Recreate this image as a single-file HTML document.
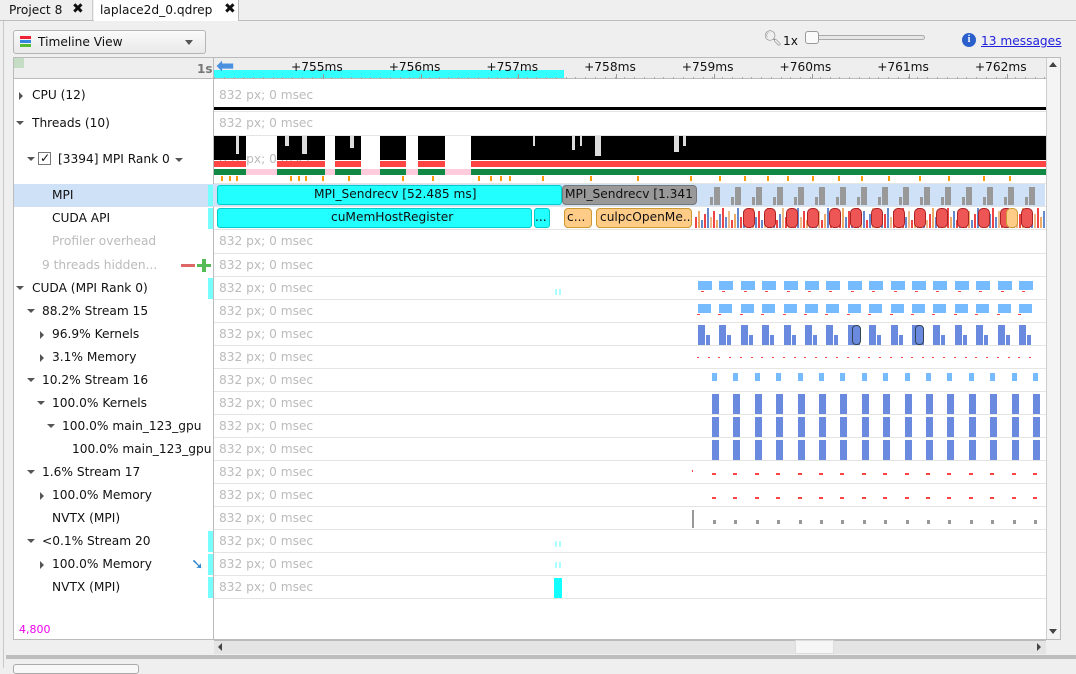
<!DOCTYPE html><html><head><meta charset="utf-8"><style>
*{margin:0;padding:0;box-sizing:border-box}
body{width:1076px;height:668px;background:#efefef;font-family:"DejaVu Sans","Liberation Sans",sans-serif;font-size:12.2px;color:#111;position:relative;overflow:hidden}
.a{position:absolute}
.t{position:absolute;white-space:nowrap;line-height:15px}
.g{color:#bbb}
.tri{position:absolute;width:0;height:0}
.tr{border-left:4px solid #555;border-top:4px solid transparent;border-bottom:4px solid transparent}
.td{border-top:4px solid #555;border-left:4px solid transparent;border-right:4px solid transparent}
</style></head><body>
<div class="a" style="left:0;top:0;width:1076px;height:21px;background:#efefef;border-bottom:1px solid #bdbdbd"></div>
<div class="a" style="left:3px;top:0;width:90px;height:21px;border-right:1px solid #ccc"></div>
<div class="t" style="left:9px;top:3px">Project 8</div><div class="t" style="left:72px;top:2px;font-weight:bold;font-size:14px">✖</div>
<div class="a" style="left:94px;top:0;width:145px;height:21px;background:#fff;border-right:1px solid #bbb"></div>
<div class="t" style="left:100px;top:3px">laplace2d_0.qdrep</div><div class="t" style="left:224px;top:2px;font-weight:bold;font-size:14px">✖</div>
<div class="a" style="left:3px;top:21px;width:1px;height:647px;background:#c8c8c8"></div>
<div class="a" style="left:13px;top:30px;width:193px;height:24px;background:linear-gradient(#fafafa,#e9e9e9);border:1px solid #b5b5b5;border-radius:3px"></div>
<div class="a" style="left:20px;top:36px;width:11px;height:3px;background:#e23"></div>
<div class="a" style="left:20px;top:40px;width:11px;height:3px;background:#38d"></div>
<div class="a" style="left:20px;top:44px;width:11px;height:3px;background:#5b3"></div>
<div class="t" style="left:38px;top:35px">Timeline View</div>
<div class="tri td" style="left:185px;top:40px;border-top-width:5px"></div>
<div class="t" style="left:763px;top:31px;font-size:15px;color:#888">🔍︎</div>
<div class="t" style="left:783px;top:34px">1x</div>
<div class="a" style="left:808px;top:35px;width:117px;height:5px;border:1px solid #aaa;border-radius:3px;background:#e6e6e6"></div>
<div class="a" style="left:805px;top:31px;width:14px;height:13px;border:1px solid #999;border-radius:3px;background:#fafafa"></div>
<div class="a" style="left:962px;top:33px;width:14px;height:14px;border-radius:50%;background:#2a5fcc;color:#fff;font-size:10px;font-weight:bold;text-align:center;line-height:14px;font-family:serif">i</div>
<div class="t" style="left:981px;top:34px;color:#2222dd;text-decoration:underline">13 messages</div>
<div class="a" style="left:13px;top:57px;width:1048px;height:583px;background:#fff;border:1px solid #bbb"></div>
<div class="a" style="left:14px;top:58px;width:200px;height:21px;background:#eee;border-bottom:1px solid #bbb"></div>
<div class="a" style="left:14px;top:58px;width:10px;height:10px;background:#c5dcc5"></div>
<div class="t" style="left:197px;top:62px;color:#777;font-weight:bold;font-size:12px">1s</div>
<div class="a" style="left:214px;top:58px;width:832px;height:21px;background:#eee;border-bottom:1px solid #bbb"></div>
<div class="a" style="left:214px;top:70px;width:350px;height:8px;background:#3ff"></div>
<div class="t" style="left:216px;top:56px;font-size:22px;color:#4a90e0;line-height:22px">⬅</div>
<div class="a" style="left:213px;top:58px;width:1px;height:581px;background:#bbb"></div>
<div class="a" style="left:1046px;top:58px;width:14px;height:581px;background:#f4f4f4;border-left:1px solid #ccc"></div>
<div class="tri" style="left:1049px;top:62px;border-bottom:5px solid #444;border-left:4px solid transparent;border-right:4px solid transparent"></div>
<div class="tri" style="left:1049px;top:629px;border-top:5px solid #444;border-left:4px solid transparent;border-right:4px solid transparent"></div>
<div class="a" style="left:214px;top:640px;width:832px;height:14px;background:#e4e4e4;border-top:1px solid #bbb"></div>
<div class="a" style="left:795px;top:640px;width:39px;height:14px;background:#f6f6f6;border:1px solid #ddd"></div>
<div class="tri" style="left:218px;top:643px;border-right:4px solid #444;border-top:4px solid transparent;border-bottom:4px solid transparent"></div>
<div class="tri" style="left:1037px;top:643px;border-left:4px solid #444;border-top:4px solid transparent;border-bottom:4px solid transparent"></div>
<div class="a" style="left:6px;top:655px;width:1070px;height:4px;background:#bdbdbd"></div>
<div class="a" style="left:13px;top:664px;width:126px;height:10px;background:#f8f8f8;border:1px solid #aaa;border-radius:3px"></div>
<div class="t" style="left:19px;top:622px;color:#e0e;font-size:11px">4,800</div>
<div id="rows"></div>
<script>
var H='';
function d(l,t,w,h,s){H+='<div class="a" style="left:'+l+'px;top:'+t+'px;width:'+w+'px;height:'+h+'px;'+s+'"></div>';}
function tx(l,t,s,c){H+='<div class="t'+(c||'')+'" style="left:'+l+'px;top:'+t+'px">'+s+'</div>';}
var labs=['+755ms','+756ms','+757ms','+758ms','+759ms','+760ms','+761ms','+762ms'];
for(var i=0;i<8;i++){var x=323+i*97.7;tx(x-32,60,labs[i],'');d(x,74,1,5,'background:#999');}
for(var x=214;x<1046;x+=9.77)d(x,77,1,2,'background:#aaa');
var rowsA=[[80,112],[112,136],[136,184],[184,207],[207,230],[230,254],[254,277],[277,300],[300,323],[323,346],[346,369],[369,392],[392,415],[415,438],[438,461],[461,484],[484,507],[507,530],[530,553],[553,576],[576,599]];
var lab=[[18,32,'CPU (12)','r'],[18,32,'Threads (10)','d'],[29,58,'[3394] MPI Rank 0','d'],[0,52,'MPI'],[0,52,'CUDA API'],[0,52,'Profiler overhead','',1],[0,42,'9 threads hidden...','',1],[18,32,'CUDA (MPI Rank 0)','d'],[29,42,'88.2% Stream 15','d'],[39,52,'96.9% Kernels','r'],[39,52,'3.1% Memory','r'],[29,42,'10.2% Stream 16','d'],[39,52,'100.0% Kernels','d'],[49,62,'100.0% main_123_gpu','d'],[0,72,'100.0% main_123_gpu'],[29,42,'1.6% Stream 17','d'],[39,52,'100.0% Memory','r'],[0,52,'NVTX (MPI)'],[29,42,'&lt;0.1% Stream 20','d'],[39,52,'100.0% Memory','r'],[0,52,'NVTX (MPI)']];
d(14,184,1031,23,'background:#cfe1f7');
for(var i=0;i<rowsA.length;i++){var r=rowsA[i],L=lab[i],c=(r[0]+r[1])/2;
 d(214,r[1]-1,832,1,'background:#e4e4e4');
 tx(219,c-8,'832 px; 0 msec',' g');
 if(L[3]=='r')H+='<div class="tri tr" style="left:'+(L[0]+1)+'px;top:'+(c-4)+'px"></div>';
 if(L[3]=='d')H+='<div class="tri td" style="left:'+(L[0]-2)+'px;top:'+(c-3)+'px"></div>';
 tx(L[1],c-8,L[2],L[4]?' g':'');
}
[3,4,7,18,19,20].forEach(function(i){d(208,rowsA[i][0]+1,5,rowsA[i][1]-rowsA[i][0]-2,'background:#7ff');});
d(38,152,13,13,'background:#fff;border:1px solid #777');tx(40,151,'✓','');
H+='<div class="tri td" style="left:175px;top:158px"></div>';
d(181,264,14,3,'background:#d66');d(197,264,14,3,'background:#5b5');d(202,259,4,13,'background:#5b5');
tx(191,557,'<span style="color:#38c;font-size:15px;font-weight:bold">➘</span>','');
d(214,107,832,3,'background:#000');
var segs=[[214,246],[277,325],[335,361],[380,406],[418,445],[471,1046]];
d(214,169,832,6,'background:#fcd');
segs.forEach(function(s){d(s[0],136,s[1]-s[0],24,'background:#000');d(s[0],161,s[1]-s[0],6,'background:#f44');d(s[0],169,s[1]-s[0],6,'background:#184');});
[[236,3,18],[285,4,10],[302,5,18],[350,4,12],[595,6,20],[674,5,16],[683,3,10],[572,3,14],[580,2,10],[533,2,10]].forEach(function(g){d(g[0],136,g[1],g[2],'background:#ddd');});
var tk=[221,229,236,290,298,305,322,348,402,432,478,490,500,509,542,590,637,690,719,744,767,787,812,838,861,888,919,948,983,1009];
tk.forEach(function(x){d(x,176,2,5,'background:#f90');});
d(217,185,345,20,'background:#2ff;border:1px solid #0cc;border-radius:3px');tx(314,187,'MPI_Sendrecv [52.485 ms]','');
d(562,185,135,20,'background:#999;border:1px solid #777;border-radius:4px');H+='<div class="t" style="left:565px;top:187px;width:128px;overflow:hidden">MPI_Sendrecv [1.341 ...</div>';
for(var k=0;k<16;k++){var x=710+k*21;d(x,197,3,8,'background:#999');d(x+4,187,6,18,'background:#999');}
d(217,208,315,20,'background:#2ff;border:1px solid #0cc;border-radius:3px');tx(331,210,'cuMemHostRegister','');
d(534,208,16,20,'background:#2ff;border:1px solid #0cc;border-radius:3px');tx(535,210,'...','');
d(564,208,28,20,'background:#fc8;border:1px solid #c93;border-radius:4px');tx(567,210,'c...','');
d(596,208,96,20,'background:#fc8;border:1px solid #c93;border-radius:4px');H+='<div class="t" style="left:600px;top:210px;width:90px;overflow:hidden">culpcOpenMe...</div>';
var cols=['#e44','#68c','#eb8','#e44','#ea6','#68c'];
for(var x=695;x<1045;x+=3){var h=6+((x*7)%15);d(x,228-h,2,h,'background:'+cols[(x/3|0)%6]);}
for(var k=0;k<14;k++){var x=743+k*21.4;d(x,208,12,20,'background:#e55;border:1px solid #a22;border-radius:5px');}
d(1006,208,12,20,'background:#fc8;border:1px solid #c93;border-radius:5px');
var K=[];for(var k=0;k<16;k++)K.push(698+k*21.4);
function rep(top,h,w,col,off){K.forEach(function(x){d(x+(off||0),top,w,h,'background:'+col);});}
rep(281,9,14,'#7bf');rep(291,1,3,'#f44',3);
rep(304,9,13,'#7bf');rep(314,1,3,'#f44',-1);
rep(325,20,7,'#6a8ae0');rep(335,10,4,'#6a8ae0',8);
d(852,325,9,20,'background:#6a8ae0;border:1px solid #345;border-radius:4px');d(915,325,9,20,'background:#6a8ae0;border:1px solid #345;border-radius:4px');
rep(357,1,2,'#f44',-1);rep(357,1,2,'#f44',10);
rep(373,8,5,'#7bf',14);
rep(394,20,7,'#6a8ae0',14);rep(417,20,7,'#6a8ae0',14);rep(440,20,7,'#6a8ae0',14);
rep(473,2,4,'#f44',14);rep(497,2,4,'#f44',14);rep(520,4,3,'#999',15);
d(692,470,1,2,'background:#f44');d(692,510,2,18,'background:#999');
d(555,289,2,6,'background:#aff');d(559,289,2,6,'background:#aff');
d(555,541,2,6,'background:#aff');d(559,541,2,6,'background:#aff');
d(555,562,2,6,'background:#aff');d(559,562,2,6,'background:#aff');
d(554,578,8,20,'background:#1ff');
document.getElementById('rows').innerHTML=H;
</script>
</body></html>
